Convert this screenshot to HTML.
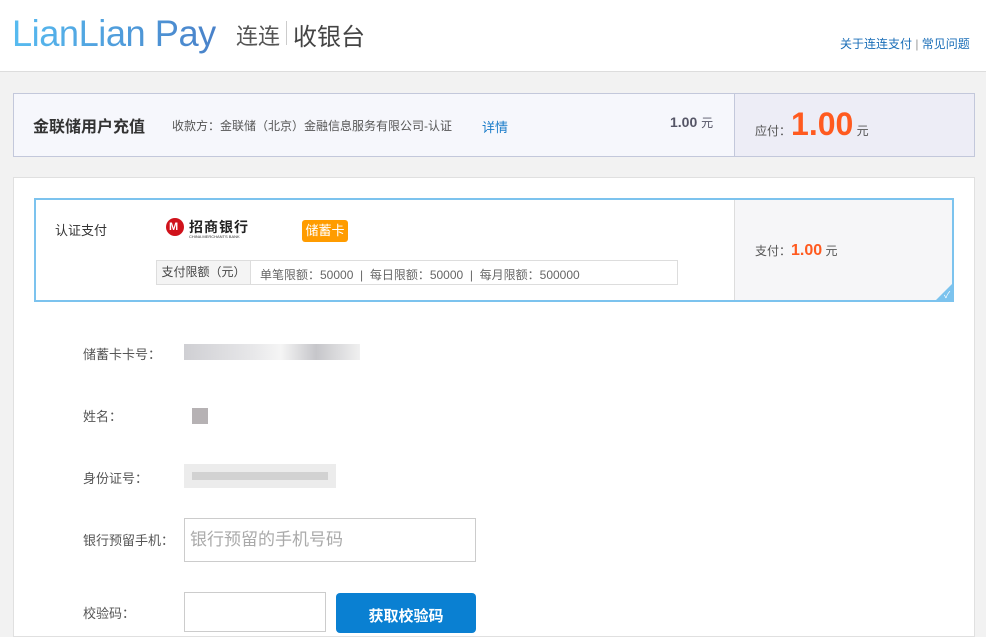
<!DOCTYPE html>
<html><head><meta charset="utf-8"><style>
*{margin:0;padding:0;box-sizing:border-box}
body{width:986px;height:618px;overflow:hidden;background:#f2f2f2;font-family:"Liberation Sans","Noto Sans CJK SC",sans-serif;font-size:12px;color:#555;position:relative}
.abs{position:absolute}
#hd{left:0;top:0;width:986px;height:72px;background:#fff;border-bottom:1px solid #ddd}
.logo{left:12px;top:12px;font-size:37px;line-height:44px;letter-spacing:-0.5px;background:linear-gradient(90deg,#3ab0ee,#2a6cc0);-webkit-background-clip:text;color:transparent;font-family:"DejaVu Sans","Liberation Sans",sans-serif;font-weight:200;white-space:nowrap}
</style></head><body>
<div id="hd" class="abs">
 <div class="abs logo" style="font-family:'Liberation Sans',sans-serif;font-weight:normal;opacity:.85;transform:scaleX(0.98);transform-origin:left">LianLian Pay</div>
 <div class="abs" style="left:236px;top:19px;font-size:22px;color:#555">连连</div>
 <div class="abs" style="left:286px;top:21px;width:1px;height:24px;background:#ccc"></div>
 <div class="abs" style="left:293px;top:17px;font-size:24px;color:#444">收银台</div>
 <div class="abs" style="left:840px;top:35px;font-size:12px;color:#1a6eb8">关于连连支付 <span style="color:#999">|</span> 常见问题</div>
</div>
<div class="abs" style="left:13px;top:93px;width:962px;height:64px;background:#f6f7fc;border:1px solid #c3c8db"></div>
<div class="abs" style="left:734px;top:94px;width:240px;height:62px;background:#ededf6;border-left:1px solid #c3c8db"></div>
<div class="abs" style="left:33px;top:113px;font-size:16px;font-weight:bold;color:#333">金联储用户充值</div>
<div class="abs" style="left:172px;top:117px;color:#555">收款方：金联储（北京）金融信息服务有限公司-认证</div>
<div class="abs" style="left:482px;top:117px;color:#1a7cc9;font-size:13px">详情</div>
<div class="abs" style="left:670px;top:114px;color:#556;font-size:14px"><b>1.00</b> <span style="font-size:12px">元</span></div>
<div class="abs" style="left:755px;top:106px;color:#555">应付：<span style="font-size:32px;font-weight:bold;color:#ff5a1f">1.00</span> 元</div>

<div class="abs" style="left:13px;top:177px;width:962px;height:460px;background:#fff;border:1px solid #e0e0e0"></div>
<div class="abs" style="left:34px;top:198px;width:920px;height:104px;border:2px solid #7cc3ee;background:#fff"></div>
<div class="abs" style="left:734px;top:200px;width:218px;height:100px;background:#f6f6f8;border-left:1px solid #ddd"></div>
<div class="abs" style="left:936px;top:284px;width:0;height:0;border-left:16px solid transparent;border-bottom:16px solid #7cc3ee"></div>
<div class="abs" style="left:944px;top:288px;color:#fff;font-size:9px">✓</div>
<div class="abs" style="left:55px;top:220px;font-size:13px;color:#333">认证支付</div>
<div class="abs" style="left:166px;top:218px;width:18px;height:18px;border-radius:50%;background:#d0121b"></div>
<div class="abs" style="left:169px;top:221px;color:#fff;font-size:11px;font-weight:bold">M</div>
<div class="abs" style="left:189px;top:217px;font-size:14px;font-weight:bold;color:#222;letter-spacing:1px">招商银行</div>
<div class="abs" style="left:189px;top:234px;font-size:4px;color:#333">CHINA MERCHANTS BANK</div>
<div class="abs" style="left:302px;top:220px;width:46px;height:22px;background:#ff9c00;border-radius:3px;color:#fff;font-size:13px;line-height:22px;text-align:center">储蓄卡</div>
<div class="abs" style="left:156px;top:260px;width:522px;height:25px;border:1px solid #ddd;background:#fff"></div>
<div class="abs" style="left:156px;top:260px;width:95px;height:25px;border:1px solid #ddd;background:#f4f4f4;color:#444;line-height:23px;text-align:center">支付限额（元）</div>
<div class="abs" style="left:260px;top:266px;color:#666">单笔限额：50000 &nbsp;| &nbsp;每日限额：50000 &nbsp;| &nbsp;每月限额：500000</div>
<div class="abs" style="left:755px;top:242px;color:#555">支付：<span style="font-size:16px;font-weight:bold;color:#ff5a1f">1.00</span> 元</div>

<div class="abs" style="left:83px;top:344px;font-size:13px;color:#555">储蓄卡卡号：</div>
<div class="abs" style="left:184px;top:344px;width:176px;height:16px;background:linear-gradient(90deg,#cfcfd3,#e8e8ea 40%,#f5f5f5 55%,#c6c6ca 75%,#f0f0f0)"></div>
<div class="abs" style="left:83px;top:406px;font-size:13px;color:#555">姓名：</div>
<div class="abs" style="left:192px;top:408px;width:16px;height:16px;background:#b6b2b4"></div>
<div class="abs" style="left:83px;top:468px;font-size:13px;color:#555">身份证号：</div>
<div class="abs" style="left:184px;top:464px;width:152px;height:24px;background:#ececec"></div>
<div class="abs" style="left:192px;top:472px;width:136px;height:8px;background:#d2d2d2"></div>
<div class="abs" style="left:83px;top:530px;font-size:13px;color:#555">银行预留手机：</div>
<div class="abs" style="left:184px;top:518px;width:292px;height:44px;border:1px solid #ccc;background:#fff;font-size:17px;color:#aaa;line-height:42px;padding-left:5px">银行预留的手机号码</div>
<div class="abs" style="left:83px;top:603px;font-size:13px;color:#555">校验码：</div>
<div class="abs" style="left:184px;top:592px;width:142px;height:40px;border:1px solid #ccc;background:#fff"></div>
<div class="abs" style="left:336px;top:593px;width:140px;height:40px;background:#0a80d2;border-radius:4px;color:#fff;font-size:15px;font-weight:bold;text-align:center;line-height:40px;padding-top:4px">获取校验码</div>
</body></html>
